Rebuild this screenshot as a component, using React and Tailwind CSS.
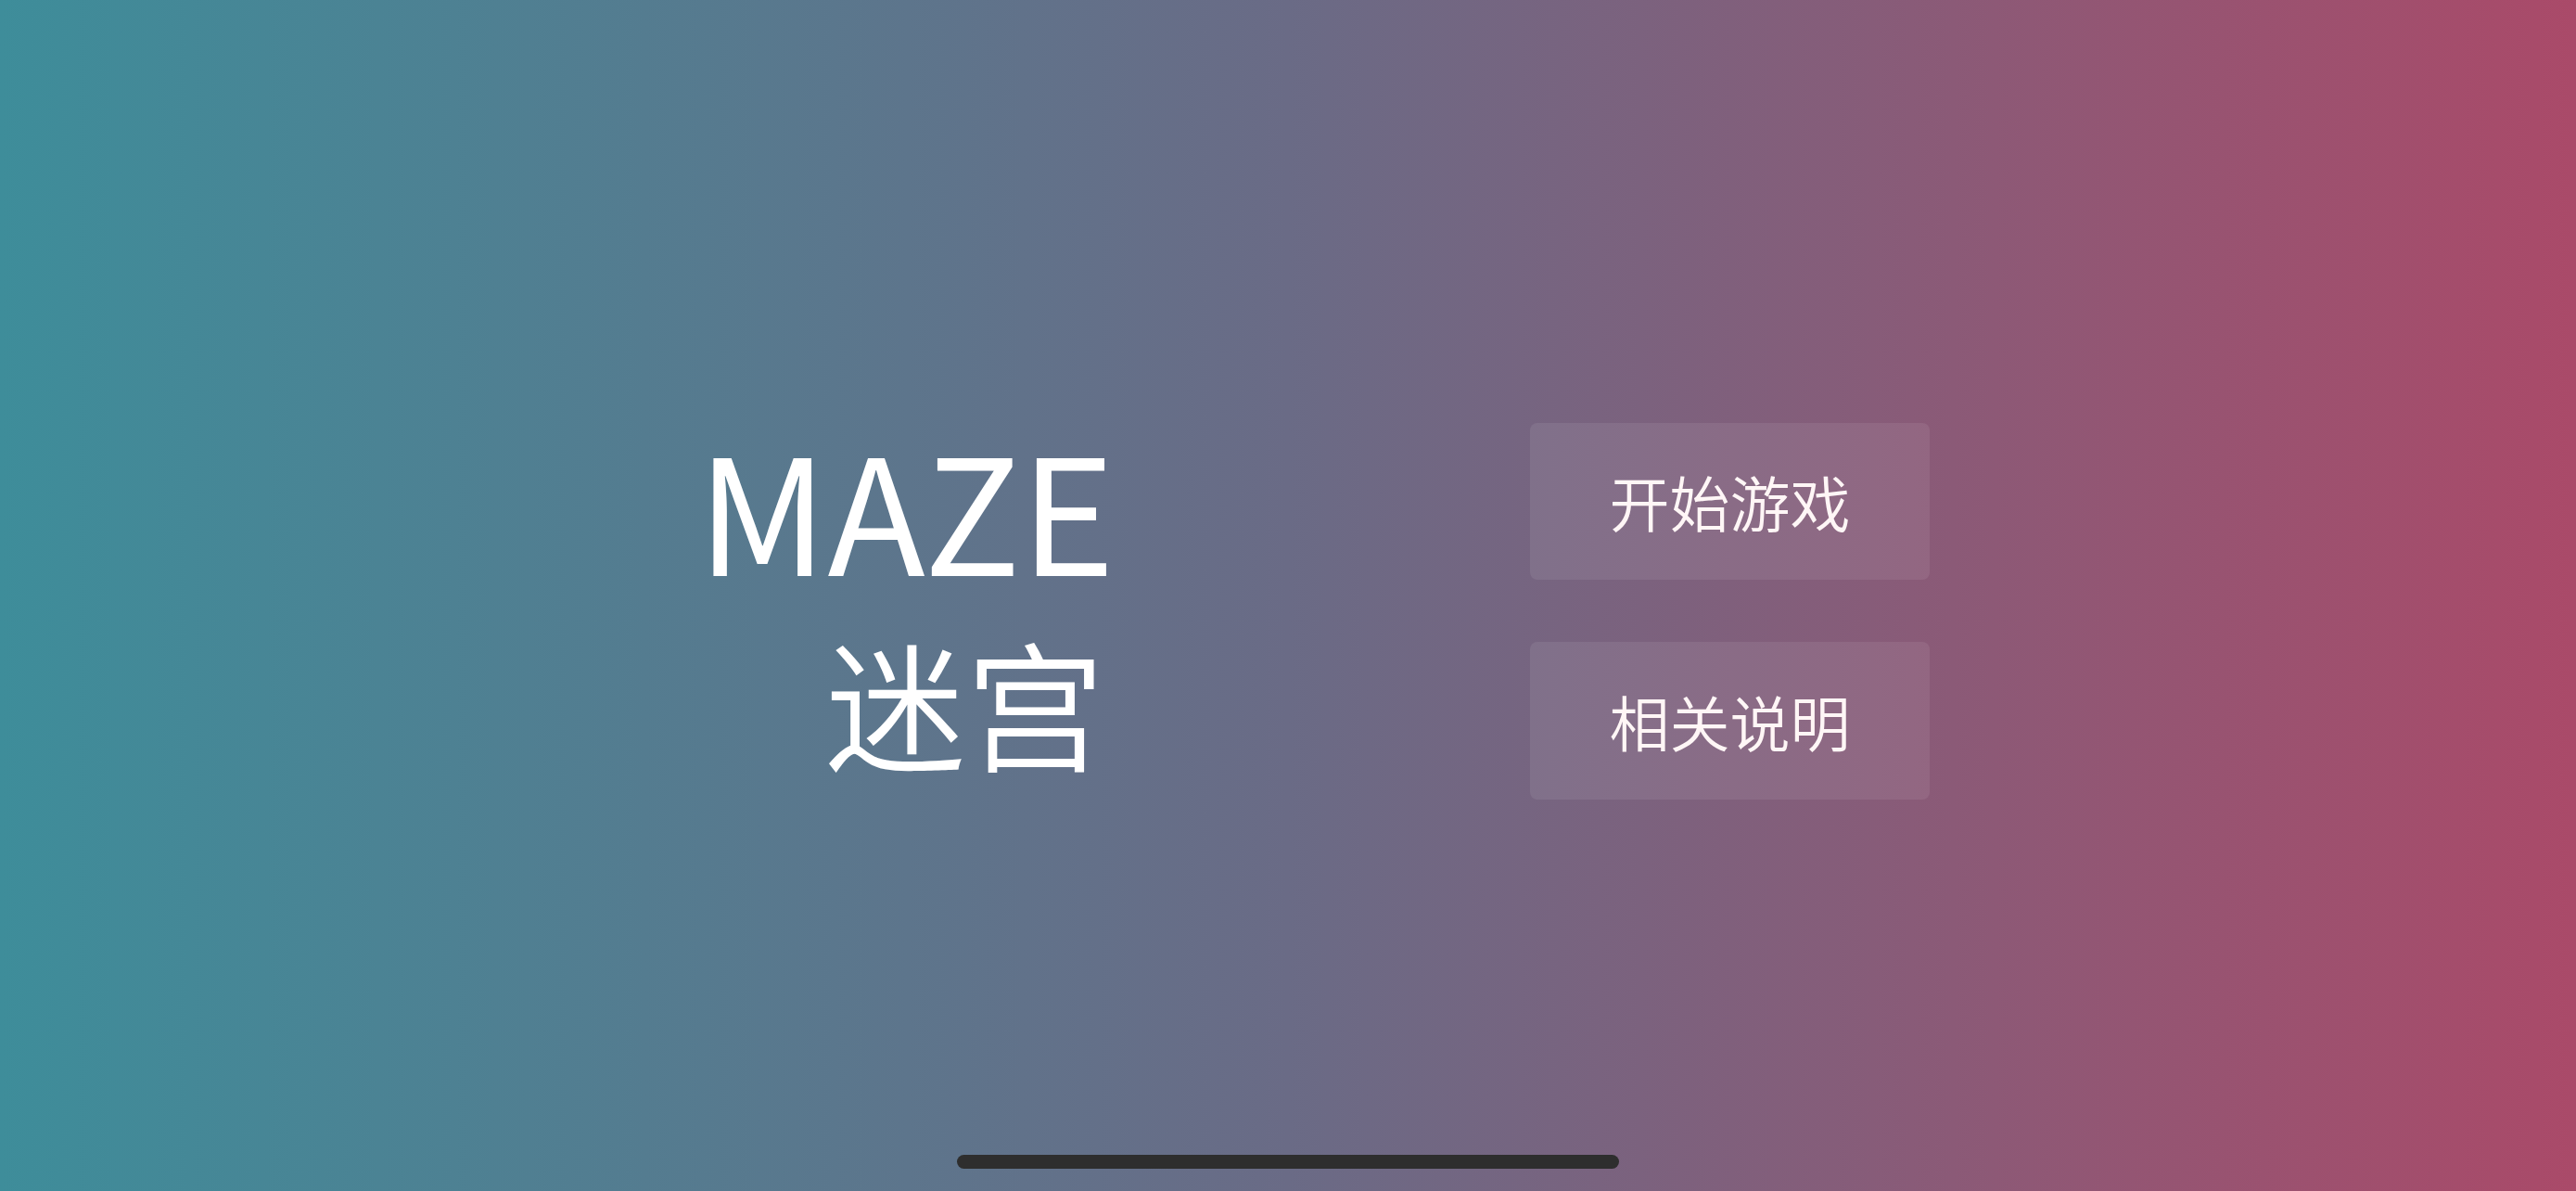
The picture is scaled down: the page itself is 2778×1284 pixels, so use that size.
export default function App() {
  return (
    <div className="relative w-full h-[1284px] overflow-hidden bg-[linear-gradient(to_right,#3e8d9a_0%,#6a6b86_50%,#aa4a69_100%)]" style={{ fontFamily: '"Noto Sans CJK SC", "Noto Sans", sans-serif' }}>
      <div className="flex pl-[752px] pt-[456px]">
        <div className="flex flex-col w-[440px]">
          <div className="mt-[3px] text-[173px] leading-[173px] text-white font-normal whitespace-nowrap">MAZE</div>
          <div className="mt-[48px] pl-[138px] text-[151px] leading-[151px] text-white font-[350] whitespace-nowrap">迷宫</div>
        </div>
        <div className="ml-[458px] flex flex-col gap-[67px]">
          <button className="w-[431px] h-[169px] rounded-[8px] bg-white/[0.08] text-[#fff6f6] text-[65px] leading-none font-[350] flex items-center justify-center">开始游戏</button>
          <button className="w-[431px] h-[170px] rounded-[8px] bg-white/[0.08] text-[#fff6f6] text-[65px] leading-none font-[350] flex items-center justify-center">相关说明</button>
        </div>
      </div>
      <div className="absolute left-[1032px] top-[1245px] w-[714px] h-[15px] rounded-full bg-[#2e2e2e]"></div>
    </div>
  );
}
